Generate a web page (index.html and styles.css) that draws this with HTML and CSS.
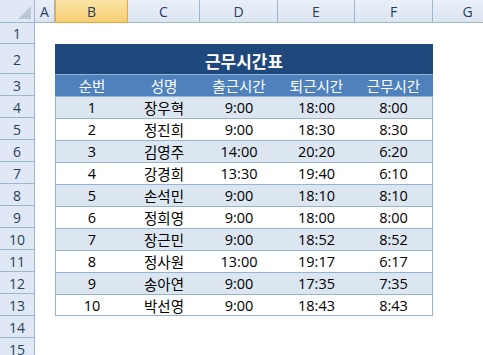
FILE: index.html
```html
<!DOCTYPE html>
<html lang="ko">
<head>
<meta charset="utf-8">
<title>근무시간표</title>
<link rel="stylesheet" href="styles.css">
</head>
<body>
<div class="sheet">
  <div class="corner"><span class="tri"></span></div>
  <div class="colh">A</div>
  <div class="colh sel">B</div>
  <div class="colh">C</div>
  <div class="colh">D</div>
  <div class="colh">E</div>
  <div class="colh">F</div>
  <div class="colh">G</div>

  <div class="rowh">1</div><div class="c"></div><div class="c span5"></div><div class="c"></div>

  <div class="rowh r2">2</div><div class="c"></div><div class="title span5">근무시간표</div><div class="c"></div>

  <div class="rowh">3</div><div class="c"></div>
  <div class="th first">순번</div><div class="th">성명</div><div class="th">출근시간</div><div class="th">퇴근시간</div><div class="th last">근무시간</div>
  <div class="c"></div>

  <div class="rowh">4</div><div class="c"></div>
  <div class="td first alt">1</div><div class="td alt">장우혁</div><div class="td alt">9:00</div><div class="td alt">18:00</div><div class="td last alt">8:00</div>
  <div class="c"></div>

  <div class="rowh">5</div><div class="c"></div>
  <div class="td first">2</div><div class="td">정진희</div><div class="td">9:00</div><div class="td">18:30</div><div class="td last">8:30</div>
  <div class="c"></div>

  <div class="rowh">6</div><div class="c"></div>
  <div class="td first alt">3</div><div class="td alt">김영주</div><div class="td alt">14:00</div><div class="td alt">20:20</div><div class="td last alt">6:20</div>
  <div class="c"></div>

  <div class="rowh">7</div><div class="c"></div>
  <div class="td first">4</div><div class="td">강경희</div><div class="td">13:30</div><div class="td">19:40</div><div class="td last">6:10</div>
  <div class="c"></div>

  <div class="rowh">8</div><div class="c"></div>
  <div class="td first alt">5</div><div class="td alt">손석민</div><div class="td alt">9:00</div><div class="td alt">18:10</div><div class="td last alt">8:10</div>
  <div class="c"></div>

  <div class="rowh">9</div><div class="c"></div>
  <div class="td first">6</div><div class="td">정희영</div><div class="td">9:00</div><div class="td">18:00</div><div class="td last">8:00</div>
  <div class="c"></div>

  <div class="rowh">10</div><div class="c"></div>
  <div class="td first alt">7</div><div class="td alt">장근민</div><div class="td alt">9:00</div><div class="td alt">18:52</div><div class="td last alt">8:52</div>
  <div class="c"></div>

  <div class="rowh">11</div><div class="c"></div>
  <div class="td first">8</div><div class="td">정사원</div><div class="td">13:00</div><div class="td">19:17</div><div class="td last">6:17</div>
  <div class="c"></div>

  <div class="rowh">12</div><div class="c"></div>
  <div class="td first alt">9</div><div class="td alt">송아연</div><div class="td alt">9:00</div><div class="td alt">17:35</div><div class="td last alt">7:35</div>
  <div class="c"></div>

  <div class="rowh">13</div><div class="c"></div>
  <div class="td first bottom">10</div><div class="td bottom">박선영</div><div class="td bottom">9:00</div><div class="td bottom">18:43</div><div class="td last bottom">8:43</div>
  <div class="c"></div>

  <div class="rowh">14</div><div class="c"></div><div class="c span5"></div><div class="c"></div>
  <div class="rowh">15</div><div class="c"></div><div class="c span5"></div><div class="c"></div>
</div>
</body>
</html>
```

FILE: styles.css
```css
* { box-sizing: border-box; }
html, body { margin: 0; padding: 0; background: #ffffff; overflow: hidden; }
body {
  width: 483px;
  height: 355px;
  font-family: "Open Sans", "Noto Sans CJK KR", sans-serif;
}
.sheet {
  display: grid;
  grid-template-columns: 35px 20px 73px 72px 78px 77px 78px 70px;
  grid-template-rows: 23px 21px 30px repeat(13, 22px);
}
.corner {
  position: relative;
  background: #dfe8f4;
  border-right: 1px solid #9eb6ce;
  border-bottom: 1px solid #9eb6ce;
}
.tri {
  position: absolute;
  right: 3px;
  bottom: 3px;
  width: 0;
  height: 0;
  border-left: 13px solid transparent;
  border-bottom: 13px solid #b9c8d9;
}
.colh {
  background: linear-gradient(#eaf0f8, #dbe5f2);
  border-right: 1px solid #9eb6ce;
  border-bottom: 1px solid #9eb6ce;
  display: flex;
  align-items: center;
  justify-content: center;
  font-size: 14px;
  color: #27405e;
  padding-top: 1px;
}
.colh.sel {
  background: linear-gradient(#fbe3a6, #f6cf73);
  border-right: 1px solid #f0a93a;
  border-bottom: 1px solid #e8a13a;
  border-left: 1px solid #f0a93a;
}
.colh:last-child { border-right: none; }
.rowh {
  background: #dfe8f4;
  border-right: 1px solid #9eb6ce;
  border-bottom: 1px solid #9eb6ce;
  display: flex;
  align-items: center;
  justify-content: center;
  font-size: 14px;
  color: #27405e;
  padding-top: 1px;
}
.c { background: #ffffff; }
.span5 { grid-column: span 5; }
.title {
  background: #1f497d;
  color: #ffffff;
  font-family: "Noto Sans CJK KR", sans-serif;
  font-weight: bold;
  font-size: 17px;
  display: flex;
  align-items: center;
  justify-content: center;
  padding-top: 2px;
}
.th {
  background: #4f81bd;
  color: #ffffff;
  font-family: "Noto Sans CJK KR", sans-serif;
  font-size: 14.5px;
  display: flex;
  align-items: center;
  justify-content: center;
  border-top: 1px solid #95b3d7;
}
.td {
  background: #ffffff;
  color: #000000;
  font-size: 14.5px;
  display: flex;
  align-items: center;
  justify-content: center;
  border-top: 1px solid #95b3d7;
}
.td.alt { background: #dce6f1; }
.td.bottom { border-bottom: 1px solid #95b3d7; }
.first { border-left: 1px solid #95b3d7; }
.last { border-right: 1px solid #95b3d7; }
.th.first { border-left-color: #4f81bd; }
.th.last { border-right-color: #4f81bd; }
```
